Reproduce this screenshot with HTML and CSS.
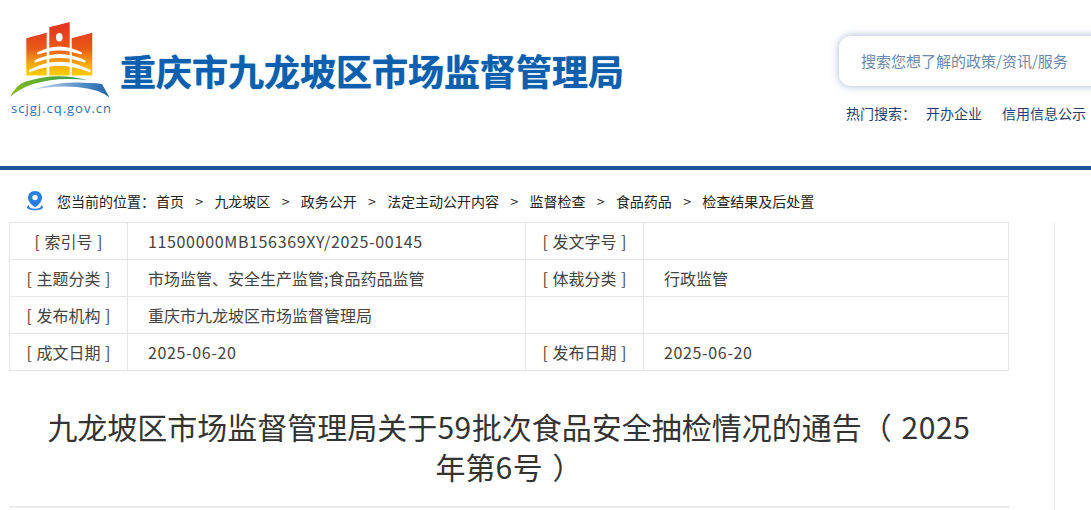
FILE: index.html
```html
<!DOCTYPE html>
<html lang="zh-CN">
  <head>
    <meta charset="utf-8" />
    <title>重庆市九龙坡区市场监督管理局</title>
    <link rel="stylesheet" href="styles.css">
  </head>
  <body>
    <!-- Header -->
    <header class="header">
      <div class="logo">
        <div class="logo-mark">
          <svg width="102" height="78" viewBox="0 0 102 78">
            <defs>
              <linearGradient id="tower" gradientUnits="userSpaceOnUse" x1="0" y1="5" x2="0" y2="54">
                <stop offset="0" stop-color="#e2381c" />
                <stop offset="0.45" stop-color="#ea5a1a" />
                <stop offset="0.75" stop-color="#f8a60e" />
                <stop offset="1" stop-color="#ffd000" />
              </linearGradient>
              <linearGradient id="green" x1="0" y1="0" x2="1" y2="0">
                <stop offset="0" stop-color="#86bc1f" />
                <stop offset="0.6" stop-color="#4aa63c" />
                <stop offset="1" stop-color="#2f9a6a" />
              </linearGradient>
              <linearGradient id="blue" x1="0" y1="0" x2="1" y2="0">
                <stop offset="0" stop-color="#cfe2f0" />
                <stop offset="0.6" stop-color="#5a93c8" />
                <stop offset="1" stop-color="#1f62a8" />
              </linearGradient>
            </defs>
            <path d="M17.300 16.300 L37.700 10.700 V53.500 H17.300 Z" fill="url(#tower)" />
            <path d="M40.300 5.300 L60.700 0 V53.500 H40.300 Z" fill="url(#tower)" />
            <path d="M62.700 16.300 L83.300 10.700 V53.500 H62.700 Z" fill="url(#tower)" />
            <ellipse cx="50.300" cy="15.300" rx="3.300" ry="4.300" fill="#fff" />
            <path d="M28 30.500 Q50 18.500 73 30.500 Q73.500 33 71 32.300 Q50 24.500 30 32.300 Q27.500 33 28 30.500 Z" fill="#fff" />
            <path d="M25.500 38.500 Q50 25.500 76.500 38.500 Q77 41 74.500 40.300 Q50 31.500 27.500 40.300 Q25 41 25.500 38.500 Z" fill="#fff" />
            <path d="M20 48 Q50 31.500 81.500 48 Q82 51 79.500 49.800 Q50 38 22 49.800 Q19.500 51 20 48 Z" fill="#fff" />
            <path d="M38.800 25 V53.500 M61.700 25 V53.500" stroke="#fff" stroke-width="1" fill="none" />
            <path d="M1 75 Q7 63 16 59.700 Q47 49.500 78 58 Q48 54.500 24 62 Q10 67 1 75 Z" fill="url(#green)" />
            <path d="M23 68 Q45 60 68 60.500 Q82 60.500 93 62 L100.500 75.500 Q90 67 68 65 Q45 63 23 68 Z" fill="url(#blue)" />
          </svg>
        </div>
        <span class="logo-url">scjgj.cq.gov.cn</span>
      </div>
      <h1 class="site-title">重庆市九龙坡区市场监督管理局</h1>
      <div class="header-right">
        <div class="search-box">搜索您想了解的政策/资讯/服务</div>
        <div class="hot-search">
          <span class="hot-label">热门搜索：</span>
          <a class="hot-link">开办企业</a>
          <a class="hot-link">信用信息公示</a>
        </div>
      </div>
    </header>

    <!-- Breadcrumb -->
    <nav class="crumbs">
      <svg class="crumbs-pin" width="18" height="21" viewBox="0 0 18 21">
        <path d="M9 1 C4.600 1 2 4.300 2 7.800 C2 11.600 6 15.300 9 17.500 C12 15.300 16 11.600 16 7.800 C16 4.300 13.400 1 9 1 Z" fill="#2a7de1" />
        <circle cx="9" cy="7.500" r="2.700" fill="#fff" />
        <path d="M3.500 15 C1.500 15.800 1 16.600 1 17.300 C1 19.300 5 20.300 9 20.300 C13 20.300 17 19.300 17 17.300 C17 16.600 16.500 15.800 14.500 15 C15.500 16 15.500 18.500 9 18.800 C2.500 18.500 2.500 16 3.500 15 Z" fill="#2a7de1" />
      </svg>
      <span class="crumbs-label">您当前的位置：</span>
      <a>首页</a><i>&gt;</i>
      <a>九龙坡区</a><i>&gt;</i>
      <a>政务公开</a><i>&gt;</i>
      <a>法定主动公开内容</a><i>&gt;</i>
      <a>监督检查</a><i>&gt;</i>
      <a>食品药品</a><i>&gt;</i>
      <a>检查结果及后处置</a>
    </nav>

    <main class="content">
      <div class="article">
        <table class="info-table">
          <colgroup>
            <col class="col-label" />
            <col class="col-main" />
            <col class="col-label" />
            <col />
          </colgroup>
          <tr>
            <th>[ 索引号 ]</th>
            <td class="num">11500000MB156369XY/2025-00145</td>
            <th>[ 发文字号 ]</th>
            <td></td>
          </tr>
          <tr>
            <th>[ 主题分类 ]</th>
            <td>市场监管、安全生产监管;食品药品监管</td>
            <th>[ 体裁分类 ]</th>
            <td>行政监管</td>
          </tr>
          <tr>
            <th>[ 发布机构 ]</th>
            <td>重庆市九龙坡区市场监督管理局</td>
            <th></th>
            <td></td>
          </tr>
          <tr>
            <th>[ 成文日期 ]</th>
            <td class="num">2025-06-20</td>
            <th>[ 发布日期 ]</th>
            <td class="num">2025-06-20</td>
          </tr>
        </table>
        <h2 class="article-title">九龙坡区市场监督管理局关于<span class="title-num">59</span>批次食品安全抽检情况的通告（ <span class="title-num">2025</span>年第<span class="title-num">6</span>号 ）</h2>
      </div>
      <div class="side-line"></div>
    </main>
  </body>
</html>
```
FILE: styles.css
```css
* {
  margin: 0;
  padding: 0;
  box-sizing: border-box;
}

html, body {
  height: 510px;
  overflow: hidden;
}

body {
  font-family: 'Noto Sans CJK SC', 'Noto Sans', sans-serif;
  background-color: #fff;
  color: #333;
}

/* Header */
.header {
  display: flex;
  height: 170px;
  border-bottom: 4px solid #20519b;
  padding: 22px 0 0 9px;
}

.logo {
  width: 103px;
  display: flex;
  flex-direction: column;
  flex-shrink: 0;
}

.logo-mark {
  height: 78px;
}

.logo-url {
  font-family: 'Open Sans', sans-serif;
  font-size: 13px;
  letter-spacing: 1px;
  line-height: 16px;
  color: #2f6fae;
  margin-left: 2px;
  white-space: nowrap;
}

.site-title {
  font-size: 36px;
  line-height: 50px;
  font-weight: 700;
  color: #0e5fae;
  margin: 23px 0 0 8px;
  white-space: nowrap;
  text-shadow: 0 0 1px #0e5fae;
}

.header-right {
  margin: 14px 0 0 215px;
  flex-shrink: 0;
}

.search-box {
  width: 300px;
  height: 50px;
  padding-left: 22px;
  border-radius: 12px;
  background: #fff;
  box-shadow: 0 0 8px rgba(60, 90, 150, 0.45);
  color: #6b88ad;
  font-size: 15px;
  line-height: 50px;
}

.hot-search {
  display: flex;
  margin: 17px 0 0 7px;
  font-size: 14px;
  line-height: 20px;
  color: #1f3f73;
  white-space: nowrap;
}

.hot-label {
  width: 80px;
}

.hot-link {
  margin-right: 20px;
}

/* Breadcrumb */
.crumbs {
  display: flex;
  align-items: center;
  height: 52px;
  padding: 9px 0 0 26px;
  font-size: 14px;
  color: #222;
  white-space: nowrap;
}

.crumbs-pin {
  margin-right: 13px;
}

.crumbs-label {
  margin-right: 1px;
}

.crumbs i {
  font-style: normal;
  margin: 0 11.300px;
}

/* Article */
.content {
  display: flex;
  padding-left: 9px;
}

.article {
  width: 1000px;
  flex-shrink: 0;
}

.info-table {
  width: 1000px;
  table-layout: fixed;
  border-collapse: collapse;
  font-size: 16px;
  color: #444;
}

.col-label {
  width: 118px;
}

.col-main {
  width: 398px;
}

.info-table th,
.info-table td {
  height: 37px;
  border: 1px solid #e6e6e6;
  font-weight: 400;
}

.info-table th {
  text-align: center;
  word-spacing: 1px;
}

.info-table td {
  padding-left: 20px;
}

.info-table .num {
  letter-spacing: 0.65px;
}

.article-title {
  font-size: 30px;
  line-height: 40px;
  font-weight: 400;
  word-spacing: 3px;
  text-align: center;
  padding: 35px 30px 20px;
  border-bottom: 2px solid #ececec;
}

.title-num {
  letter-spacing: 0.6px;
}

.side-line {
  width: 1px;
  height: 290px;
  margin-left: 45px;
  background: #eee;
}
```
